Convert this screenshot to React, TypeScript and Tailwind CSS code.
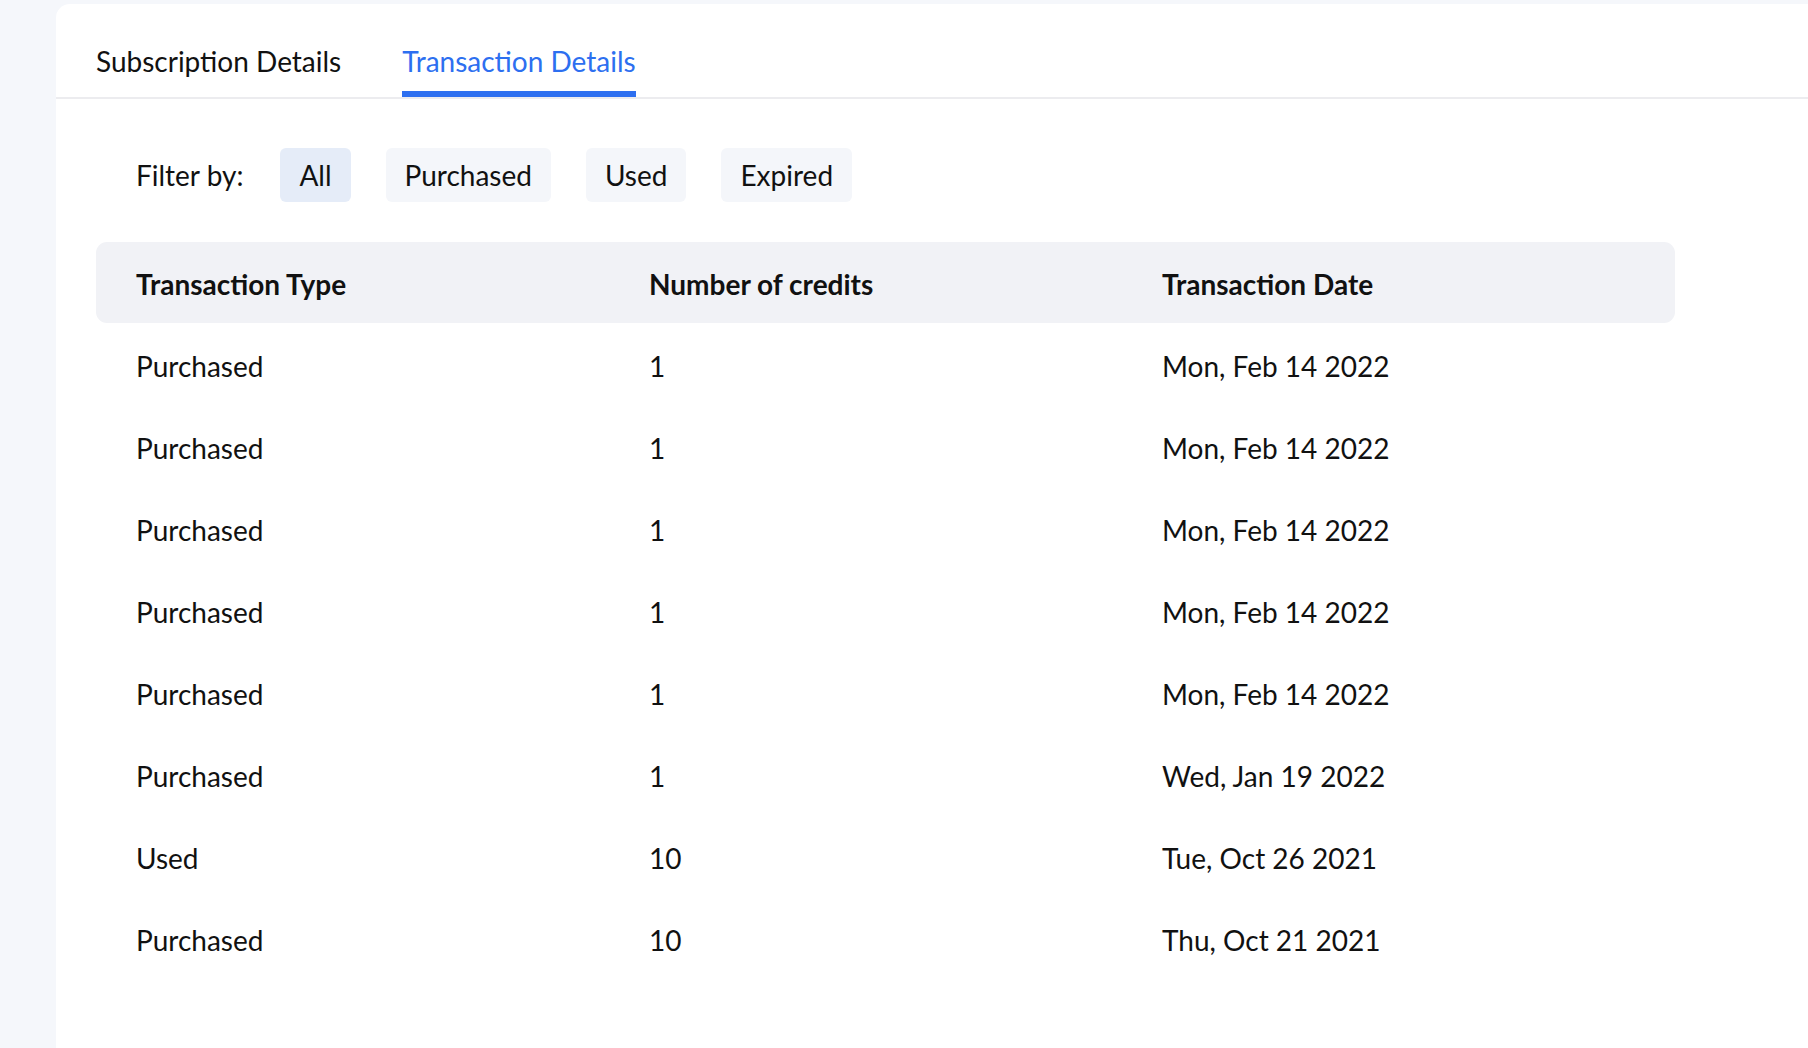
import { useState } from 'react'

const filters = ['All', 'Purchased', 'Used', 'Expired']

const rows = [
  { type: 'Purchased', credits: '1', date: 'Mon, Feb 14 2022' },
  { type: 'Purchased', credits: '1', date: 'Mon, Feb 14 2022' },
  { type: 'Purchased', credits: '1', date: 'Mon, Feb 14 2022' },
  { type: 'Purchased', credits: '1', date: 'Mon, Feb 14 2022' },
  { type: 'Purchased', credits: '1', date: 'Mon, Feb 14 2022' },
  { type: 'Purchased', credits: '1', date: 'Wed, Jan 19 2022' },
  { type: 'Used', credits: '10', date: 'Tue, Oct 26 2021' },
  { type: 'Purchased', credits: '10', date: 'Thu, Oct 21 2021' },
]

export default function App() {
  const [tab, setTab] = useState('transactions')
  const [filter, setFilter] = useState('All')

  return (
    <div className="h-screen overflow-hidden bg-[#f5f7fb] pl-[56px] pt-[4px] font-['Lato',_'Noto_Sans',_sans-serif] text-[28px] text-[#111]">
      <div className="h-full rounded-tl-[14px] bg-white">
        <div className="flex gap-[61px] border-b-2 border-[#ececef] px-[40px]">
          <button
            onClick={() => setTab('subscription')}
            className={`border-b-[6px] pt-[40px] pb-[13px] leading-[34px] ${tab === 'subscription' ? 'border-[#2d6ff0] text-[#2d6ff0]' : 'border-transparent text-[#111]'}`}
          >
            Subscription Details
          </button>
          <button
            onClick={() => setTab('transactions')}
            className={`border-b-[6px] pt-[40px] pb-[13px] leading-[34px] ${tab === 'transactions' ? 'border-[#2d6ff0] text-[#2d6ff0]' : 'border-transparent text-[#111]'}`}
          >
            Transaction Details
          </button>
        </div>

        <div className="px-[40px]">
          <div className="mt-[49px] flex items-center pl-[40px]">
            <span className="mr-[37px] leading-[34px]">Filter by:</span>
            <div className="flex gap-[35px]">
              {filters.map((f) => (
                <button
                  key={f}
                  onClick={() => setFilter(f)}
                  className={`h-[54px] rounded-[6px] px-[19px] leading-[34px] ${filter === f ? 'bg-[#e5ecf8]' : 'bg-[#f4f6fa]'}`}
                >
                  {f}
                </button>
              ))}
            </div>
          </div>

          <div className="mt-[40px] w-[1579px]">
            <div className="grid h-[81px] grid-cols-[513px_513px_1fr] items-center rounded-[11px] bg-[#f1f2f6] pl-[40px] pt-[2px] font-bold">
              <div>Transaction Type</div>
              <div>Number of credits</div>
              <div>Transaction Date</div>
            </div>
            {rows.map((r, i) => (
              <div key={i} className="grid h-[82px] grid-cols-[513px_513px_1fr] items-center pl-[40px] pt-[3px]">
                <div>{r.type}</div>
                <div>{r.credits}</div>
                <div>{r.date}</div>
              </div>
            ))}
          </div>
        </div>
      </div>
    </div>
  )
}
